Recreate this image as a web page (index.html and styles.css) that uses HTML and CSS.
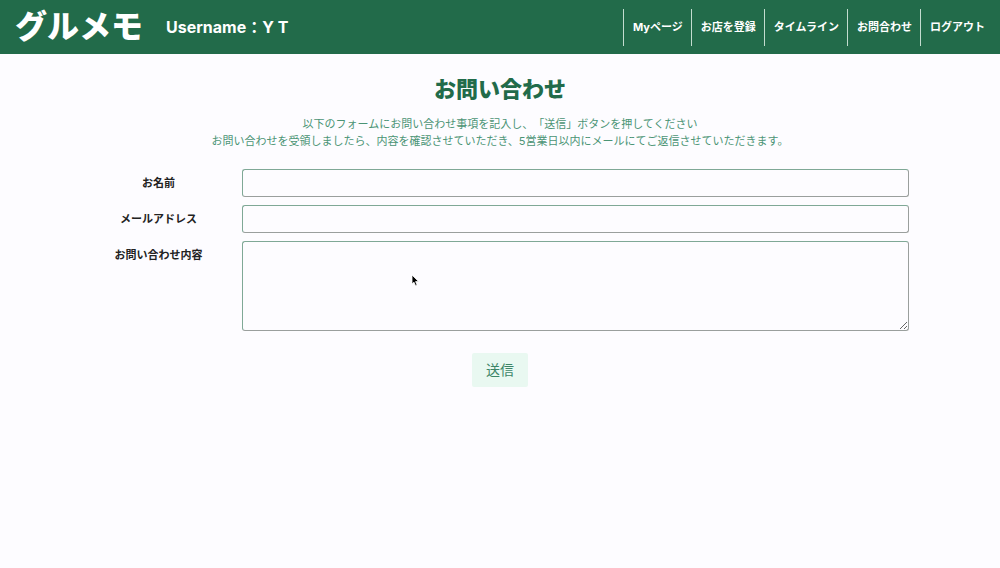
FILE: index.html
```html
<!DOCTYPE html>
<html lang="ja">
<head>
<meta charset="utf-8">
<meta name="viewport" content="width=device-width, initial-scale=1">
<title>お問い合わせ | グルメモ</title>
<link rel="stylesheet" href="styles.css">
</head>
<body>
<header class="header">
  <div class="brand">
    <a class="logo" href="#">グルメモ</a>
    <p class="username">Username<span class="colon">：</span>Y T</p>
  </div>
  <nav class="nav">
    <a class="nav-link" href="#">Myページ</a>
    <a class="nav-link" href="#">お店を登録</a>
    <a class="nav-link" href="#">タイムライン</a>
    <a class="nav-link" href="#">お問合わせ</a>
    <a class="nav-link" href="#">ログアウト</a>
  </nav>
</header>
<main class="main">
  <h1 class="title">お問い合わせ</h1>
  <p class="lead">以下のフォームにお問い合わせ事項を記入し、「送信」ボタンを押してください<br>お問い合わせを受領しましたら、内容を確認させていただき、5営業日以内にメールにてご返信させていただきます。</p>
  <form class="form">
    <div class="row">
      <label class="label" for="name">お名前</label>
      <input class="field" id="name" type="text">
    </div>
    <div class="row">
      <label class="label" for="email">メールアドレス</label>
      <input class="field" id="email" type="email">
    </div>
    <div class="row">
      <label class="label" for="message">お問い合わせ内容</label>
      <textarea class="field field-area" id="message"></textarea>
    </div>
    <button class="submit" type="submit">送信</button>
  </form>
</main>
<svg class="cursor" viewBox="0 0 10 14" aria-hidden="true"><path d="M2 1v9l2-1.800 1.500 3.500 1.600-.7-1.500-3.400h3z" fill="#000" stroke="#fff" stroke-width=".8"/></svg>
</body>
</html>
```
FILE: styles.css
```css
* {
  box-sizing: border-box;
}

body {
  margin: 0;
  background: #fdfcff;
  color: #222;
  font-family: Inter, "Noto Sans CJK JP", sans-serif;
  text-spacing-trim: space-all;
}

.header {
  display: flex;
  justify-content: space-between;
  align-items: center;
  padding: 3px 7px 3px 15px;
  background: #226b4a;
  color: #fff;
}

.brand {
  display: flex;
  align-items: center;
  gap: 23px;
}

.logo {
  color: #fff;
  font-size: 32px;
  font-weight: 900;
  line-height: 48px;
  text-decoration: none;
}

.username {
  margin: 0;
  font-size: 16px;
  font-weight: 700;
  line-height: 24px;
}

.colon {
  display: inline-block;
  width: 16px;
}

.nav {
  display: flex;
}

.nav-link {
  padding: 0 8px 0 9px;
  border-left: 1px solid #c3dccf;
  color: #fff;
  font-size: 11px;
  font-weight: 700;
  line-height: 37px;
  text-decoration: none;
}

.main {
  padding: 18px 0;
  text-align: center;
}

.title {
  margin: 0;
  color: #226b4a;
  font-size: 22px;
  font-weight: 900;
  line-height: 34px;
}

.lead {
  margin: 10px 0 19px;
  color: #4b9475;
  font-size: 11px;
  line-height: 17px;
}

.form {
  display: flex;
  flex-direction: column;
  gap: 8px;
  width: 85%;
  margin: 0 auto;
}

.row {
  display: grid;
  grid-template-columns: 1fr 4fr;
  padding-right: 16px;
}

.label {
  font-size: 11px;
  font-weight: 700;
  line-height: 28px;
}

.field {
  width: 100%;
  height: 28px;
  padding: 4px 8px;
  border: 1px solid;
  border-color: #7fa896 #9a9f9d #9a9f9d #7fa896;
  border-radius: 3px;
  background: #fdfcff;
  font: inherit;
  font-size: 11px;
}

.field-area {
  display: block;
  height: 90px;
  resize: vertical;
}

.submit {
  align-self: center;
  margin-top: 14px;
  padding: 0 14px;
  border: 0;
  border-radius: 2px;
  background: #e9f8f1;
  color: #3c8567;
  font: inherit;
  font-size: 14px;
  line-height: 34px;
}

.cursor {
  position: absolute;
  top: 274px;
  left: 410px;
  width: 10px;
  height: 14px;
}
```
